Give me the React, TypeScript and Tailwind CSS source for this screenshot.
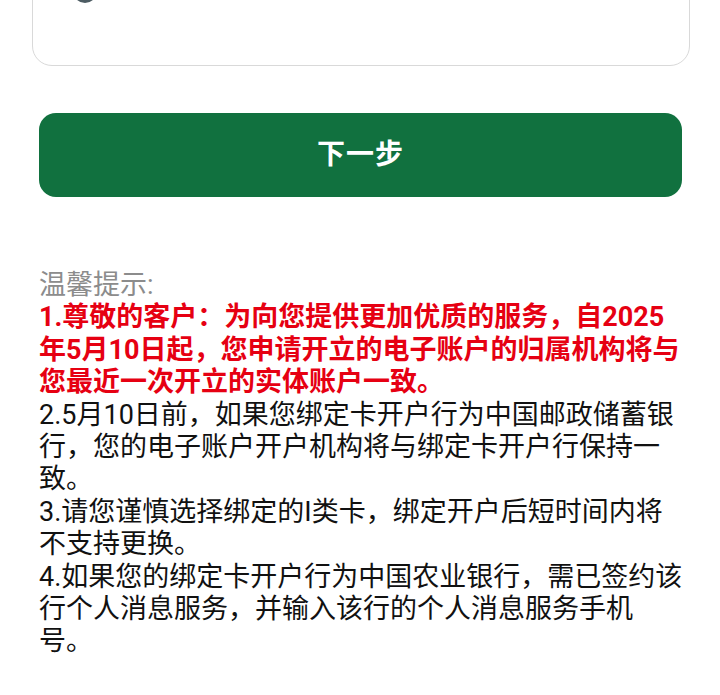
const tips = [
  '2.5月10日前，如果您绑定卡开户行为中国邮政储蓄银行，您的电子账户开户机构将与绑定卡开户行保持一致。',
  '3.请您谨慎选择绑定的I类卡，绑定开户后短时间内将不支持更换。',
  '4.如果您的绑定卡开户行为中国农业银行，需已签约该行个人消息服务，并输入该行的个人消息服务手机号。',
]

export default function App() {
  return (
    <div
      className="min-h-[695px] bg-white overflow-hidden"
      style={{ fontFamily: 'Roboto, "Noto Sans CJK SC", sans-serif' }}
    >
      {/* card cut off by the top edge */}
      <div className="ml-[32px] mr-[30px] -mt-[60px] h-[126px] rounded-[20px] border-[1.5px] border-[#d9d9d9] bg-white pt-[38px] pl-[40px]">
        <div className="w-[24px] h-[24px] rounded-full bg-[#4d5c63]" />
      </div>

      <button className="mt-[47px] ml-[39px] w-[643px] h-[84px] rounded-[17px] bg-[#11713f] text-white text-[28px] font-bold tracking-[1px] flex items-center justify-center">
        下一步
      </button>

      <div className="mt-[72px] pl-[39px] pr-[35px] text-[27px] leading-[1.2]">
        <p className="text-[#8c8c8c]">温馨提示:</p>
        <p className="text-[#e60012] font-bold">
          1.尊敬的客户：为向您提供更加优质的服务，自2025年5月10日起，您申请开立的电子账户的归属机构将与您最近一次开立的实体账户一致。
        </p>
        {tips.map((t) => (
          <p key={t} className="text-[#111111]">
            {t}
          </p>
        ))}
      </div>
    </div>
  )
}
